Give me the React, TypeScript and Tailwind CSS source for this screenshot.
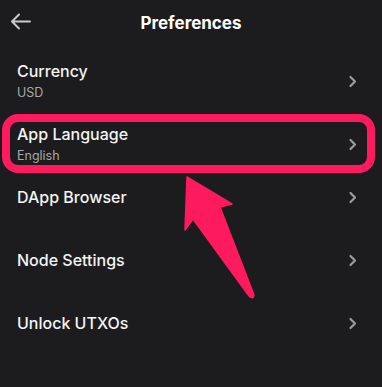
type Item = { title: string; subtitle?: string };

const items: Item[] = [
  { title: "Currency", subtitle: "USD" },
  { title: "App Language", subtitle: "English" },
  { title: "DApp Browser" },
  { title: "Node Settings" },
  { title: "Unlock UTXOs" },
];

function Chevron() {
  return (
    <svg width="9" height="13" viewBox="0 0 9 13" fill="none" stroke="#9c9c9c" strokeWidth="2.2" strokeLinecap="round" strokeLinejoin="round">
      <path d="M2.5 2l4.5 4.5-4.5 4.5" />
    </svg>
  );
}

function Row({ item }: { item: Item }) {
  return (
    <div className="h-[63px] pl-[17px] pr-[25px]">
      <div className="flex items-center justify-between">
        <div className="flex flex-col">
          <span className="text-[16px] leading-[20px] font-medium text-[#f4f4f4]">{item.title}</span>
          {item.subtitle && (
            <span className="text-[12.5px] leading-[16px] mt-[4px] text-[#a9a9a9]">{item.subtitle}</span>
          )}
        </div>
        <Chevron />
      </div>
    </div>
  );
}

export default function App() {
  return (
    <div
      className="relative w-[382px] h-[387px] overflow-hidden bg-[#1c1c1e]"
      style={{ fontFamily: "Inter, 'Noto Sans', sans-serif" }}
    >
      <div className="relative h-[44px] pt-[3px] flex items-center justify-center">
        <svg
          className="absolute left-[9px] top-[12px]"
          width="24"
          height="20"
          viewBox="0 0 24 20"
          fill="none"
          stroke="#c9c9c9"
          strokeWidth="2"
          strokeLinecap="round"
          strokeLinejoin="round"
        >
          <path d="M21 9.5H3M10 2.5L3 9.5l7 7" />
        </svg>
        <h1 className="text-[17px] font-bold text-white">Preferences</h1>
      </div>

      <div className="pt-[17px]">
        {items.map((item) => (
          <Row key={item.title} item={item} />
        ))}
      </div>

      {/* annotation */}
      <div className="absolute left-[2px] top-[114px] w-[373px] h-[59px] rounded-[16px] border-[8px] border-[#fe1a5e]" />
      <svg className="absolute left-0 top-0" width="382" height="387" viewBox="0 0 382 387">
        <path
          d="M187 177 L232 204 L220 207 L254 295 Q253 300 249 296 L193 219 L185 230 Z"
          fill="#fe1a5e"
          stroke="#fe1a5e"
          strokeWidth="1.5"
          strokeLinejoin="round"
        />
      </svg>
    </div>
  );
}
